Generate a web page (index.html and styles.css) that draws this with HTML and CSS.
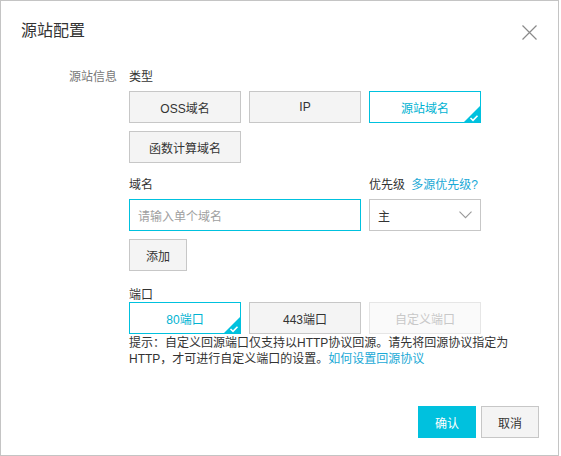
FILE: index.html
```html
<!DOCTYPE html>
<html lang="zh-CN">
<head>
<meta charset="utf-8">
<title>源站配置</title>
<link rel="stylesheet" href="styles.css">
</head>
<body>
<div class="dialog">
  <div class="header">
    <div class="title">源站配置</div>
    <svg class="close" width="15" height="15" viewBox="0 0 15 15"><path d="M0.5 0.5 L14.5 14.5 M14.5 0.5 L0.5 14.5" stroke="#8a8a8a" stroke-width="1.2" fill="none"/></svg>
  </div>
  <div class="body">
    <div class="form-label">源站信息</div>
    <div class="form-content">
      <div class="field-label type-label">类型</div>
      <div class="btn-grid">
        <div class="opt">OSS域名</div>
        <div class="opt">IP</div>
        <div class="opt selected">源站域名<svg class="mark" width="18" height="18" viewBox="0 0 18 18"><polygon points="18,0 18,18 0,18" fill="#00c1de"/><polyline points="7.5,13 10,15.3 14.5,10.8" stroke="#fff" stroke-width="1.6" fill="none"/></svg></div>
        <div class="opt">函数计算域名</div>
      </div>
      <div class="row-labels">
        <div class="field-label">域名</div>
        <div class="field-label prio">优先级 <a class="link">多源优先级?</a></div>
      </div>
      <div class="inputs">
        <div class="input"><span class="placeholder">请输入单个域名</span></div>
        <div class="select"><span>主</span><svg width="13" height="8" viewBox="0 0 13 8"><polyline points="0.5,0.7 6.5,6.7 12.5,0.7" stroke="#999" stroke-width="1.1" fill="none"/></svg></div>
      </div>
      <div class="add">添加</div>
      <div class="field-label port-label">端口</div>
      <div class="ports">
        <div class="opt selected">80端口<svg class="mark" width="18" height="18" viewBox="0 0 18 18"><polygon points="18,0 18,18 0,18" fill="#00c1de"/><polyline points="7.5,13 10,15.3 14.5,10.8" stroke="#fff" stroke-width="1.6" fill="none"/></svg></div>
        <div class="opt">443端口</div>
        <div class="opt disabled">自定义端口</div>
      </div>
      <p class="hint">提示：自定义回源端口仅支持以HTTP协议回源。请先将回源协议指定为HTTP，才可进行自定义端口的设置。<a class="link">如何设置回源协议</a></p>
    </div>
  </div>
  <div class="footer">
    <div class="btn primary">确认</div>
    <div class="btn">取消</div>
  </div>
</div>
</body>
</html>
```

FILE: styles.css
```css
* { box-sizing: border-box; }
html, body { margin: 0; padding: 0; background: #fff; }
body {
  font-family: "Liberation Sans", "Noto Sans CJK SC", sans-serif;
  font-size: 12px;
  color: #333;
}
.dialog {
  width: 559px;
  height: 456px;
  border: 1px solid #c4c4c4;
  display: flex;
  flex-direction: column;
}
.header {
  display: flex;
  justify-content: space-between;
  align-items: flex-start;
  padding: 19px 21px 0 20px;
}
.title {
  font-size: 16px;
  line-height: 22px;
  color: #333;
}
.close { margin-top: 5px; }
.body {
  display: flex;
  padding: 26px 19px 0 20px;
}
.form-label {
  flex: none;
  width: 108px;
  padding-right: 12px;
  text-align: right;
  color: #777;
  line-height: 16px;
  margin-top: 1px;
}
.form-content { flex: 1; }
.field-label { line-height: 16px; color: #333; }
.type-label { margin-top: 1px; margin-bottom: 6px; }
.btn-grid {
  display: grid;
  grid-template-columns: repeat(3, 112px);
  gap: 8px;
}
.opt {
  position: relative;
  height: 32px;
  display: flex;
  align-items: center;
  justify-content: center;
  background: #f4f4f4;
  border: 1px solid #c7c7c7;
  color: #333;
  overflow: hidden;
}
.opt.selected {
  background: #fff;
  border-color: #00c1de;
  color: #00b3d2;
}
.opt.disabled {
  background: #fafafa;
  border-color: #e6e6e6;
  color: #c8c8c8;
}
.mark { position: absolute; right: -1px; bottom: -1px; }
.row-labels {
  display: flex;
  gap: 8px;
  margin-top: 14px;
  margin-bottom: 6px;
}
.row-labels .field-label:first-child { width: 232px; }
.link { color: #1aa9d6; margin-left: 3px; }
.hint .link { margin-left: 0; }
.inputs { display: flex; gap: 8px; }
.input {
  width: 232px;
  height: 32px;
  border: 1px solid #00c1de;
  display: flex;
  align-items: center;
  padding-left: 8px;
}
.placeholder { color: #a0a0a0; }
.select {
  width: 112px;
  height: 32px;
  border: 1px solid #c7c7c7;
  display: flex;
  align-items: center;
  justify-content: space-between;
  padding: 0 8px 0 8px;
}
.add {
  width: 58px;
  height: 32px;
  margin-top: 8px;
  border: 1px solid #c7c7c7;
  background: #f4f4f4;
  display: flex;
  align-items: center;
  justify-content: center;
}
.port-label { line-height: 14px; margin-top: 17px; }
.ports {
  display: grid;
  grid-template-columns: repeat(3, 112px);
  gap: 8px;
}
.hint {
  margin: 1px 0 0;
  line-height: 16px;
  color: #333;
}
.footer {
  margin-top: auto;
  display: flex;
  justify-content: flex-end;
  gap: 5px;
  padding: 0 19px 17px 0;
}
.btn {
  width: 58px;
  height: 32px;
  border: 1px solid #c7c7c7;
  background: #f4f4f4;
  display: flex;
  align-items: center;
  justify-content: center;
  color: #333;
}
.btn.primary {
  background: #00c1de;
  border-color: #00c1de;
  color: #fff;
}
```
